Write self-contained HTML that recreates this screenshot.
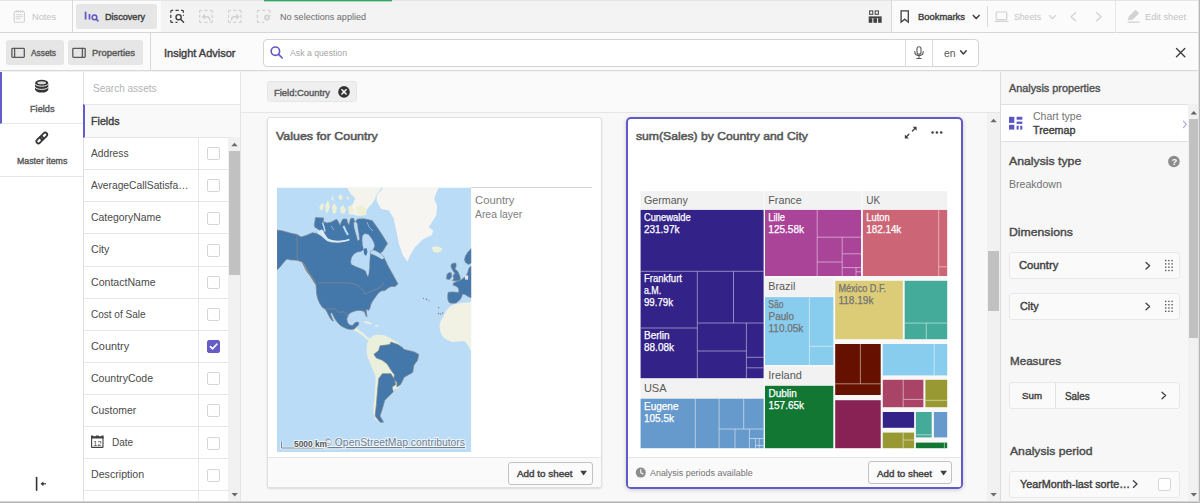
<!DOCTYPE html>
<html lang="en"><head>
<meta charset="utf-8">
<title>Insight Advisor</title>
<style>
*{box-sizing:border-box;margin:0;padding:0}
html,body{width:1200px;height:503px;overflow:hidden;background:#fff}
body{font-family:"Liberation Sans",sans-serif;color:#404040;font-size:12px}
#app{position:relative;width:1200px;height:503px;overflow:hidden;background:#f2f2f2}
.a{position:absolute}
.t{position:absolute;white-space:nowrap;line-height:14px;transform-origin:0 50%}
.b{-webkit-text-stroke-width:0.4px}
svg{position:absolute;overflow:visible}
/* top bars */
#bar1{left:0;top:0;width:1200px;height:33px;background:#fbfbfb;border-bottom:1px solid #d6d6d6}
#bar2{left:0;top:33px;width:1200px;height:38px;background:#fbfbfb;border-bottom:1px solid #d9d9d9}
.btn{position:absolute;background:#e6e6e6;border-radius:3px}
.vdiv{position:absolute;width:1px;background:#d9d9d9}
/* left */
#icons{left:0;top:72px;width:83px;height:431px;background:#fff}
#assets{left:83px;top:72px;width:157px;height:431px;background:#fff;border-left:1px solid #e0e0e0}
.row{position:absolute;left:0;width:145px;height:32.13px;border-bottom:1px solid #e6e6e6}
.row .t{left:7px;top:9px;font-size:11px;color:#4a4a4a}
.cb{position:absolute;left:123px;top:9.4px;width:13px;height:13px;border:1px solid #d6d6d6;border-radius:2px;background:#fff}
/* main */
#main{left:240px;top:72px;width:760px;height:431px;background:#f8f8f8;border-left:1px solid #e4e4e4}
.card{position:absolute;background:#fff;border:1px solid #e0e0e0;border-radius:3px;box-shadow:0 1px 2px rgba(0,0,0,0.12)}
.foot{position:absolute;left:0;right:0;bottom:0;height:30px;background:#fafafa;border-top:1px solid #e6e6e6;border-radius:0 0 3px 3px}
.add{position:absolute;width:84.5px;height:22.5px;border:1px solid #c2c2c2;border-radius:3px;background:#fbfbfb}
/* right */
#right{left:1000px;top:72px;width:200px;height:431px;background:#f7f7f7;border-left:1px solid #dcdcdc}
.pbox{position:absolute;left:8px;width:171px;height:27px;background:#fafafa;border:1px solid #e8e8e8;border-radius:3px}
.h{position:absolute;left:8px;font-size:11.4px;-webkit-text-stroke-width:0.4px;color:#4a4a4a;white-space:nowrap;line-height:14px;transform-origin:0 50%}
</style>
</head>
<body>
<div id="app">

<!-- ===== top bar 1 ===== -->
<div id="bar1" class="a">
  <div class="a" style="left:161px;top:0;width:730px;height:32px;background:#f3f3f3"></div>
  <div class="a" style="left:0;top:0;width:1200px;height:1px;background:#e4e4e4"></div>
  <div class="a" style="left:264px;top:0;width:128px;height:1px;background:#2fa862"></div><div class="a" style="left:264px;top:1px;width:128px;height:1px;background:#2fa862;opacity:.35"></div>
  <div class="t" style="left: 32px; top: 10px; font-size: 9.3px; color: rgb(196, 196, 196); transform: scaleX(0.988);">Notes</div>
  <div class="vdiv" style="left:72px;top:0;height:33px"></div>
  <div class="btn" style="left:76px;top:4px;width:81px;height:25px"></div>
  <div class="t b" style="left: 105px; top: 10px; font-size: 9.3px; color: rgb(64, 64, 64); transform: scaleX(0.98);">Discovery</div>
  <div class="t" style="left: 280px; top: 10px; font-size: 9.3px; color: rgb(107, 107, 107); transform: scaleX(0.973);">No selections applied</div>
  <div class="vdiv" style="left:891px;top:0;height:33px"></div>
  <div class="t b" style="left: 918px; top: 10px; font-size: 9.3px; color: rgb(64, 64, 64); transform: scaleX(1.011);">Bookmarks</div>
  <div class="vdiv" style="left:987px;top:6px;height:21px"></div>
  <div class="t" style="left: 1014px; top: 10px; font-size: 9.3px; color: rgb(196, 196, 196); transform: scaleX(0.933);">Sheets</div>
  <div class="vdiv" style="left:1115px;top:0;height:33px;background:#e6e6e6"></div>
  <div class="t" style="left: 1145px; top: 10px; font-size: 9.3px; color: rgb(196, 196, 196); transform: scaleX(0.991);">Edit sheet</div>
</div>

<!-- ===== top bar 2 ===== -->
<div id="bar2" class="a">
  <div class="btn" style="left:6px;top:7px;width:58px;height:25px"></div>
  <div class="t b" style="left: 31px; top: 13px; font-size: 9.3px; color: rgb(89, 89, 89); transform: scaleX(0.896);">Assets</div>
  <div class="btn" style="left:68px;top:7px;width:75px;height:25px"></div>
  <div class="t b" style="left: 92px; top: 13px; font-size: 9.3px; color: rgb(89, 89, 89); transform: scaleX(1.015);">Properties</div>
  <div class="vdiv" style="left:150px;top:0;height:38px"></div>
  <div class="t b" style="left: 163.5px; top: 13px; font-size: 10.7px; color: rgb(64, 64, 64); transform: scaleX(1.029);">Insight Advisor</div>
  <div class="a" style="left:263px;top:5.5px;width:716px;height:28.5px;background:#fff;border:1px solid #d4d4d4;border-radius:4px"></div>
  <div class="t" style="left: 290px; top: 13px; font-size: 9.6px; color: rgb(166, 166, 166); transform: scaleX(0.906);">Ask a question</div>
  <div class="vdiv" style="left:905px;top:7px;height:26px;background:#d9d9d9"></div>
  <div class="vdiv" style="left:932px;top:7px;height:26px;background:#d9d9d9"></div>
  <div class="t" style="left: 943.5px; top: 13px; font-size: 11px; color: rgb(89, 89, 89); transform: scaleX(0.939);">en</div>
</div>

<!-- ===== left icon column ===== -->
<div id="icons" class="a">
  <div class="a" style="left:0;top:0;width:83px;height:52px;border-left:2px solid #655dc6;border-bottom:1px solid #e6e6e6"></div>
  <div class="t b" style="left: 29.5px; top: 30px; font-size: 9.3px; color: rgb(89, 89, 89); transform: scaleX(0.987);">Fields</div>
  <div class="a" style="left:0;top:52px;width:83px;height:53px;border-bottom:1px solid #e6e6e6"></div>
  <div class="t b" style="left: 16.6px; top: 82px; font-size: 9.3px; color: rgb(89, 89, 89); transform: scaleX(0.945);">Master items</div>
</div>

<!-- ===== assets list ===== -->
<div id="assets" class="a">
  <div class="t" style="left: 8.5px; top: 9px; font-size: 11px; color: rgb(179, 179, 179); transform: scaleX(0.911);">Search assets</div>
  <div class="a" style="left:-1px;top:32px;width:158px;height:34px;background:#f9f9f9;border-top:1px solid #e6e6e6;border-bottom:1px solid #e6e6e6;border-left:2px solid #655dc6"></div>
  <div class="t b" style="left: 7px; top: 42px; font-size: 10.6px; color: rgb(64, 64, 64); transform: scaleX(1.008);">Fields</div>
  <div class="a" style="left:114px;top:66px;width:1px;height:366px;background:#e8e8e8"></div>
  <div class="a" style="left:144px;top:65px;width:13px;height:366px;background:#f1f1f1"></div>
  <div class="a" style="left:145px;top:79px;width:11px;height:124px;background:#c1c1c1"></div>
  <div id="rows" class="a" style="left:0;top:66px;width:145px;height:366px">
    <div class="row" style="top:0.0px"><div class="t" style="transform: scaleX(0.929); left: 6.5px; top: 8px;">Address</div><div class="cb"></div></div>
    <div class="row" style="top:32.1px"><div class="t" style="transform: scaleX(0.934); left: 6.5px; top: 8px;">AverageCallSatisfa…</div><div class="cb"></div></div>
    <div class="row" style="top:64.3px"><div class="t" style="transform: scaleX(0.946); left: 6.5px; top: 8px;">CategoryName</div><div class="cb"></div></div>
    <div class="row" style="top:96.4px"><div class="t" style="transform: scaleX(0.971); left: 6.5px; top: 8px;">City</div><div class="cb"></div></div>
    <div class="row" style="top:128.5px"><div class="t" style="transform: scaleX(0.962); left: 6.5px; top: 8px;">ContactName</div><div class="cb"></div></div>
    <div class="row" style="top:160.7px"><div class="t" style="transform: scaleX(0.91); left: 6.8px; top: 8px;">Cost of Sale</div><div class="cb"></div></div>
    <div class="row" style="top:192.8px"><div class="t" style="transform: scaleX(0.989); left: 6.8px; top: 8px;">Country</div><div class="cb" style="background:#655dc6;border-color:#655dc6"></div></div>
    <div class="row" style="top:224.9px"><div class="t" style="transform: scaleX(0.958); left: 6.8px; top: 8px;">CountryCode</div><div class="cb"></div></div>
    <div class="row" style="top:257.0px"><div class="t" style="transform: scaleX(0.948); left: 6.8px; top: 8px;">Customer</div><div class="cb"></div></div>
    <div class="row" style="top:289.2px"><div class="t" style="left: 27.7px; transform: scaleX(0.912); top: 8px;">Date</div><div class="cb"></div></div>
    <div class="row" style="top:321.3px"><div class="t" style="transform: scaleX(0.967); left: 6.8px; top: 8px;">Description</div><div class="cb"></div></div>
    <div class="row" style="top:353.4px"><div class="cb"></div></div>
  </div>
</div>

<!-- ===== main ===== -->
<div id="main" class="a">
  <div class="a" style="left:0;top:0;width:759px;height:41px;background:#fafafa;border-bottom:1px solid #e6e6e6"></div>
  <div class="a" style="left:26px;top:9px;width:90px;height:20.5px;background:#efefef;border:1px solid #e6e6e6;border-radius:3px"></div>
  <div class="t b" style="left: 33px; top: 14px; font-size: 9.3px; color: rgb(89, 89, 89); transform: scaleX(1.013);">Field:Country</div>

  <!-- card 1 -->
  <div id="card1" class="card" style="left:26px;top:45px;width:335px;height:371px">
    <div class="t b" style="left: 7.9px; top: 11px; font-size: 11.5px; color: rgb(89, 89, 89); -webkit-text-stroke-width: 0.55px; transform: scaleX(1.078);">Values for Country</div>
    <div class="a" style="left:203px;top:69px;width:121px;height:1px;background:#d4d4d4"></div>
    <div class="t" style="left: 207.2px; top: 75px; font-size: 11px; color: rgb(128, 128, 128); transform: scaleX(1.023);">Country</div>
    <div class="t" style="left: 207.2px; top: 89px; font-size: 11px; color: rgb(128, 128, 128); transform: scaleX(0.943);">Area layer</div>
    <div class="foot"><div class="add" style="left:240.3px;top:4px"></div><div class="t b" style="left: 249.2px; top: 9px; font-size: 9.3px; color: rgb(64, 64, 64); transform: scaleX(1.061);">Add to sheet</div></div>
  </div>

  <!-- card 2 -->
  <div id="card2" class="card" style="left:385px;top:45px;width:337px;height:372px;border:2px solid #625ac8;border-radius:5px;box-shadow:0 1px 4px rgba(0,0,0,0.18)">
    <div class="t b" style="left: 7.9px; top: 10px; font-size: 11.5px; color: rgb(89, 89, 89); -webkit-text-stroke-width: 0.55px; transform: scaleX(1.059);">sum(Sales) by Country and City</div>
    <div class="foot" style="border-radius:0 0 2px 2px"><div class="add" style="left:240.3px;top:3px;width:83.5px;height:23px"></div><div class="t b" style="left: 248.7px; top: 9px; font-size: 9.3px; color: rgb(64, 64, 64); transform: scaleX(1.053);">Add to sheet</div>
    <div class="t" style="left: 22px; top: 8px; font-size: 9.2px; color: rgb(115, 115, 115); transform: scaleX(0.971);">Analysis periods available</div></div>
  </div>

  <!-- main scrollbar -->
  <div class="a" style="left:746px;top:41px;width:13px;height:390px;background:#f1f1f1"></div>
  <div class="a" style="left:747px;top:179px;width:11px;height:60px;background:#c1c1c1"></div>
</div>

<!-- ===== right panel ===== -->
<div id="right" class="a">
  <div class="t b" style="left: 8.3px; top: 9px; font-size: 10.5px; color: rgb(82, 82, 82); transform: scaleX(1.03);">Analysis properties</div>
  <div class="a" style="left:0;top:32px;width:187px;height:38px;background:#fff;border-top:1px solid #e0e0e0;border-bottom:1px solid #e0e0e0"></div>
  <div class="t" style="left: 32.4px; top: 37px; font-size: 11px; color: rgb(115, 115, 115); transform: scaleX(0.956);">Chart type</div>
  <div class="t b" style="left: 32.4px; top: 51px; font-size: 10.5px; color: rgb(64, 64, 64); transform: scaleX(1.018);">Treemap</div>
  <div class="h" style="top: 82px; transform: scaleX(1.076); left: 8.3px;">Analysis type</div>
  <div class="t" style="left: 8.3px; top: 105px; font-size: 11px; color: rgb(115, 115, 115); transform: scaleX(0.961);">Breakdown</div>
  <div class="h" style="top: 153px; transform: scaleX(1.074); left: 8.3px;">Dimensions</div>
  <div class="pbox" style="top:180px"></div>
  <div class="t b" style="left: 18.4px; top: 187px; font-size: 10.4px; color: rgb(64, 64, 64); transform: scaleX(1.08);">Country</div>
  <div class="pbox" style="top:221px"></div>
  <div class="t b" style="left: 18.9px; top: 228px; font-size: 10.4px; color: rgb(64, 64, 64); transform: scaleX(1.039);">City</div>
  <div class="h" style="top: 282px; transform: scaleX(1.02); left: 8.7px;">Measures</div>
  <div class="pbox" style="top:310px"></div>
  <div class="a" style="left:54px;top:310px;width:1px;height:27px;background:#e3e3e3"></div>
  <div class="t b" style="left: 21.1px; top: 317px; font-size: 9.4px; color: rgb(64, 64, 64); transform: scaleX(1.037);">Sum</div>
  <div class="t b" style="left: 64.2px; top: 318px; font-size: 10.4px; color: rgb(64, 64, 64); transform: scaleX(0.954);">Sales</div>
  <div class="h" style="top: 372px; transform: scaleX(1.068); left: 8.7px;">Analysis period</div>
  <div class="pbox" style="top:399px"></div>
  <div class="t b" style="left: 18.9px; top: 406px; font-size: 10.4px; color: rgb(64, 64, 64); transform: scaleX(1.039);">YearMonth-last sorte…</div>
  <div class="cb" style="left:157px;top:406px;width:13px;height:13px"></div>
  <!-- scrollbar -->
  <div class="a" style="left:187px;top:32px;width:13px;height:399px;background:#f1f1f1"></div>
  <div class="a" style="left:188px;top:47px;width:12px;height:219px;background:#c1c1c1"></div>
</div>

<svg id="map" class="a" style="left:0;top:0" width="1200" height="503" viewBox="0 0 1200 503" font-family="Liberation Sans, sans-serif">
<defs><clipPath id="mc"><rect x="277" y="187.5" width="194.3" height="264.5"></rect></clipPath></defs>
<g clip-path="url(#mc)">
<rect x="277" y="187.5" width="194.3" height="264.5" fill="#bbdcf7"></rect>
<polygon points="383.6,187.5 376.7,195.2 376.7,201.3 381.3,209 389,210.5 393.5,218.1 396.6,231.9 398.9,244.1 402.7,254.8 407.3,261.7 410.4,254.8 415,247.2 422.6,239.5 431.8,235 433.3,230.4 428.7,227.3 436.4,215 437.1,205.9 434.1,198.2 438.7,187.5" fill="#f6f5f1"></polygon>
<polygon points="347,187.5 381.5,187.5 379.5,191 376.5,194.5 375,199 372.5,203 368,208 364,214 358,216 352,214 349,209 353,204 355,198 350,193" fill="#f4f4ec"></polygon>
<polygon points="443.5,316.5 446,311 450,306.5 455,304 461,303 466,302.5 471.3,302 471.3,352 468,345 464.5,341 458,341.5 452.5,342 447,340 443,337 440,331 439.5,325 441,320" fill="#f1f1e4"></polygon>
<polygon points="353.5,329 356,327.5 358,329 360,331 363,332.5 365,335 368,337.5 370,338.5 369,340.5 366,339 363.5,336.5 360.5,334 357.5,332 354.5,331" fill="#ebf0dc"></polygon>
<polygon points="369,339.5 372,336.5 376,334.5 380,335 384,335 387,336.5 391,338.5 395,341 398.5,343 402,347 404.5,349.5 414,352 419,354.5 417.5,360.5 414,365 412.5,372.5 404,377.5 400.5,384.5 398,389 394.5,388.5 393.5,392 390,395.5 385,400.5 382.5,409 380,416 383.5,422.5 379.5,422.5 375,419 373.5,414 373.5,406 374.5,398 375,390 375.5,382 375.5,376 373,370 370,363 367.5,357 366.5,350 367,344" fill="#ebf0dc"></polygon>
<polygon points="364,321 368,321.5 372,323.5 371,324.5 367,323.5 364,322.5" fill="#ebf0dc"></polygon>
<polygon points="375,325 378.5,325 378,326.5 375,326.5" fill="#ebf0dc"></polygon>
<polygon points="432,247.5 435,246.3 439,246.8 442.3,248.5 441,251.5 437.5,252.8 434,252 432.5,250" fill="#eef0da"></polygon>
<polygon points="319,208 322,203 324,205 322,211" fill="#eef0d6"></polygon>
<polygon points="325,206 328,200 330,206 328,212 326,213" fill="#eef0d6"></polygon>
<polygon points="332,207 334,203 337,207 336,213 333,214" fill="#eef0d6"></polygon>
<polygon points="340,208 343,205 346,210 344,214 341,213" fill="#eef0d6"></polygon>
<polygon points="348,207 351,205 354,210 352,215 349,214" fill="#eef0d6"></polygon>
<polygon points="331,199 333,196 334,201" fill="#eef0d6"></polygon>
<polygon points="338,197 341,194 343,199 340,200" fill="#eef0d6"></polygon>
<polygon points="346,198 348,196 349,200" fill="#eef0d6"></polygon>
<polygon points="356,207 362,205 367,209 366,215 360,216 357,213" fill="#eef0d6"></polygon>
<polygon points="277,230 283,231 290,233 297,234.5 301,237 306,235.5 312.5,232.7 317,233.5 316,230 314.3,225 315.5,217.5 323.8,218 323,221.5 327,223 331.5,222 334,220.5 336.6,219.3 338.5,222 340,225.5 341.5,221.5 343,219 346.7,219 347.5,222.5 349,225 350,220.5 351,218.3 353.7,218.3 354.5,222 356,221 357.5,219 364,218.8 372.2,220.6 377.3,227.6 382.4,235.3 387.5,243.6 385,247.5 382.4,251.8 380,253 383,256 385.5,260.5 387.5,265 390,269.5 392.5,274 395,278.5 398,284 395,286.5 391,286.5 388,288 385,290.5 381,291 378,293.5 375.5,297 373,300.5 371,304 370,308 368.5,310.5 366,309 366.5,313 367,317 365.5,315 364.5,311.5 361,310.5 357,310.5 353.5,311.5 350,313 348,315.5 346.8,319 347.5,322.5 349.5,325 352.5,325.5 354,323.5 356.5,322 358.8,322.5 358.5,325 356,327 354.5,329 351,329.5 347.5,329 344,327.5 340.5,325.5 337.5,322.5 335,319 333,315 331.5,312.5 330.5,314 332,318 333.5,321 332,320.5 329.5,317 327.5,313 325.5,309.5 322,307 319.5,303 317.5,298 316.5,293 316.3,288 315.8,284 313.5,280 311,276.5 308.5,272.5 306.5,268.5 304.5,264.5 302,262 298,260.5 294,260 290.5,260 287,259 284.5,261.5 282,264.5 280,267 277,270" fill="#4477aa" stroke="#84888c" stroke-width="0.7" stroke-linejoin="round"></polygon>
<polygon points="471.3,248.5 468,252 465.5,256 464.5,259.5 465.5,262.5 468.5,264.5 471.3,263" fill="#4477aa" stroke="#84888c" stroke-width="0.7" stroke-linejoin="round"></polygon>
<polygon points="471.3,266 469,268 468,271.5 466.5,275.5 463.5,278 461,280 457,281.5 453.5,283 453,285 455.5,286 458,287.5 459,290.5 458.5,292.5 453,292 448.3,292.2 447.8,295 447.8,299 448.5,301.5 450,303 453,303.3 456,303 458,301.5 460.5,299 462,296 462.3,294 465,294.5 468,296.5 471.3,297.8" fill="#4477aa" stroke="#84888c" stroke-width="0.7" stroke-linejoin="round"></polygon>
<polygon points="452.2,263.5 455.8,263 456.2,266 455,269 457.5,271 459,274 460.3,277.5 460,280.3 456,281 452.5,280.6 454,278 452.8,276 454.8,273.5 453.2,271 451.2,267.5 451,265" fill="#4477aa" stroke="#84888c" stroke-width="0.7" stroke-linejoin="round"></polygon>
<polygon points="447,274.5 449,272.5 451.5,273 451.5,277 449.5,279.5 446.5,279" fill="#4477aa" stroke="#84888c" stroke-width="0.7" stroke-linejoin="round"></polygon>
<polygon points="373.9,354.3 378.7,350.6 380,345.8 389.7,344.6 390.9,342.1 398.1,344.6 401.8,347 404.2,349.4 413.9,351.8 418.8,354.3 417.6,360.3 413.9,365.2 412.7,372.4 404.2,377.3 400.6,384.6 396.9,387 396.9,382.1 393.3,379.7 394.5,374.9 390.9,370 387.2,364 382.4,360.3 376.3,357.9" fill="#4477aa" stroke="#84888c" stroke-width="0.7" stroke-linejoin="round"></polygon>
<polygon points="382.4,373.7 390.9,373.7 394.5,379.7 395.7,384.6 392.1,387 393.3,391.9 389.7,395.5 384.8,400.3 382.4,408.8 380,416.1 383.6,422.2 380,422.2 375.1,416.1 376.3,405.2 377.5,390.6 378.7,378.5" fill="#4477aa" stroke="#84888c" stroke-width="0.7" stroke-linejoin="round"></polygon>
<polygon points="350.6,262 351.5,257.5 354,254 357.5,252 361,251.5 363.5,249.5 362.5,245 362,240 362.5,235.5 365,233.5 368.5,234.5 371,237.5 373.5,241.5 374.8,246 373,250 370.5,253.5 370,258 369.7,263 369.5,268 369,273 368,277 366.5,274 365.5,271 362,269 358,267.5 354.5,266 351.5,264.5" fill="#bbdcf7" stroke="#84888c" stroke-width="0.4"></polygon>
<polygon points="353.7,222.5 356,221.5 357.5,224 358,229 359,234 359.5,240 357.5,240.5 356.5,236 355,231 354,227" fill="#bbdcf7" stroke="#84888c" stroke-width="0.4"></polygon>
<polygon points="370,251 374,250 378,252 382,254.5 384.5,258 382,259.5 378,257 374,255 371,254" fill="#bbdcf7" stroke="#84888c" stroke-width="0.4"></polygon>
<polygon points="313.2,228.6 316.2,228 318,229.6 320,230.6 322,229.4 324,231.6 322,233.3 318.5,233 315,232.4 312.8,231.6" fill="#bbdcf7"></polygon>
<polygon points="317,233.5 319,231 321.5,229.5 323.5,231.5 325.5,235 328,238.5 332,240 338,240.8 345,240 349.3,238.8 349.5,240.5 345,241.8 338,242.8 331,242.2 327,241 323.5,238 320.5,235.5" fill="#d9e9f3"></polygon>
<polygon points="363.5,249 366.5,248 367.5,252 366,256 364,254" fill="#4477aa"></polygon>
<path d="M322.5 222.5L324 227L325 231.5" stroke="#bbdcf7" stroke-width="1.5" fill="none"></path><path d="M343.5 226L345.5 230.5L348 235" stroke="#bbdcf7" stroke-width="2" fill="none"></path><path d="M367 222L369 227L373 231M331 226L334 230" stroke="#8fb4d9" stroke-width="1" fill="none"></path>
<polygon points="464.8,275.6 468.3,275.4 468,279.8 465,279.5" fill="#dfe8ee"></polygon>
<g fill="#7d8894"><circle cx="423.5" cy="298.4" r="0.6"></circle><circle cx="426.5" cy="299.4" r="0.8"></circle><circle cx="429" cy="300.8" r="0.6"></circle><circle cx="438.8" cy="307.8" r="0.7"></circle><circle cx="438.5" cy="313.6" r="0.8"></circle><circle cx="440.6" cy="314" r="0.8"></circle><circle cx="442.6" cy="313" r="0.7"></circle></g>
<path d="M297.1 234.7L297.1 260.5M318.1 282.9L349.4 282.9L357.1 284.9L363.2 290.3L364.7 294.1L373.9 290.3L381.6 286.4L383.1 282.6M325.8 308.9L334.9 308.9L339.4 312.5L343 311.6L348.4 316.2" stroke="#84888c" stroke-width="0.8" fill="none"></path>
<path d="M302.5 262L306.6 270.4L311.2 276.5L315.8 284" stroke="#84888c" stroke-width="1.6" fill="none"></path>
</g>
<path d="M281.5 441.5L281.5 448L340.5 448L340.5 441.5" stroke="#fff" stroke-width="2.4" fill="none" opacity="0.7"></path>
<path d="M281.5 441.5L281.5 448L340.5 448L340.5 441.5" stroke="#777" stroke-width="0.9" fill="none"></path>
<text x="324.3" y="446" font-size="11.2" fill="#6f7f8f" stroke="#fff" stroke-width="2" stroke-opacity="0.7" paint-order="stroke" text-decoration="underline" textLength="140.7" lengthAdjust="spacingAndGlyphs">© OpenStreetMap contributors</text>
<text x="294.0" y="447" font-size="9.5" font-weight="bold" fill="#555" stroke="#fff" stroke-width="2" stroke-opacity="0.8" paint-order="stroke" textLength="33.0" lengthAdjust="spacingAndGlyphs">5000 km</text>
</svg>
<svg id="tree" class="a" style="left:0;top:0" width="1200" height="503" viewBox="0 0 1200 503" font-family="Liberation Sans, sans-serif">
<rect x="640.6" y="191.2" width="306.6" height="257.0" fill="#f8f8f8"></rect>
<rect x="640.6" y="191.2" width="123.0" height="18.2" fill="#f2f2f2"></rect>
<text x="643.9" y="203.6" font-size="11" fill="#595959" textLength="44.0" lengthAdjust="spacingAndGlyphs">Germany</text>
<rect x="640.6" y="209.9" width="123.0" height="168.3" fill="#332288"></rect>
<path d="M640.6 271.3L763.6 271.3M697.3 271.3L697.3 378.2M733.5 271.3L733.5 323M697.3 323L763.6 323M640.6 328L697.3 328M697.3 351L746.4 351M746.4 323L746.4 378.2M746.4 357.3L763.6 357.3M746.4 367.8L763.6 367.8" stroke="#b9b4d8" stroke-width="0.7" fill="none"></path>
<text x="643.9" y="221.0" font-size="10" fill="#fff" stroke="#fff" stroke-width="0.25" textLength="46.8" lengthAdjust="spacingAndGlyphs">Cunewalde</text>
<text x="643.9" y="233.2" font-size="10" fill="#fff" stroke="#fff" stroke-width="0.25" textLength="35.6" lengthAdjust="spacingAndGlyphs">231.97k</text>
<text x="643.9" y="282.0" font-size="10" fill="#fff" stroke="#fff" stroke-width="0.25" textLength="38.1" lengthAdjust="spacingAndGlyphs">Frankfurt</text>
<text x="643.9" y="294.2" font-size="10" fill="#fff" stroke="#fff" stroke-width="0.25" textLength="17.3" lengthAdjust="spacingAndGlyphs">a.M.</text>
<text x="643.9" y="306.4" font-size="10" fill="#fff" stroke="#fff" stroke-width="0.25" textLength="29.2" lengthAdjust="spacingAndGlyphs">99.79k</text>
<text x="644" y="338.5" font-size="10" fill="#fff" stroke="#fff" stroke-width="0.25">Berlin</text>
<text x="644" y="350.7" font-size="10" fill="#fff" stroke="#fff" stroke-width="0.25">88.08k</text>
<rect x="640.6" y="379.3" width="123.0" height="18.9" fill="#f2f2f2"></rect>
<text x="643.9" y="391.7" font-size="11" fill="#595959">USA</text>
<rect x="640.6" y="398.7" width="123.0" height="49.5" fill="#6699cc"></rect>
<path d="M695.3 398.7L695.3 448.2M719.1 398.7L719.1 448.2M743.7 398.7L743.7 429M719.1 429L763.6 429M735 429L735 448.2M749.4 429L749.4 448.2M749.4 438.5L763.6 438.5M755.6 438.5L755.6 448.2M759.2 438.5L759.2 448.2M755.6 445.5L763.6 445.5" stroke="#d6e4f2" stroke-width="0.7" fill="none"></path>
<text x="644" y="410.0" font-size="10" fill="#fff" stroke="#fff" stroke-width="0.25">Eugene</text>
<text x="644" y="422.2" font-size="10" fill="#fff" stroke="#fff" stroke-width="0.25">105.5k</text>
<rect x="765" y="191.2" width="96.0" height="18.2" fill="#f2f2f2"></rect>
<text x="768.3" y="203.6" font-size="11" fill="#595959" textLength="33.4" lengthAdjust="spacingAndGlyphs">France</text>
<rect x="765" y="209.9" width="96.0" height="66.1" fill="#aa4499"></rect>
<path d="M817.2 209.9L817.2 276M817.2 237.2L861 237.2M842.2 237.2L842.2 276M817.2 262L842.2 262M842.2 253.8L861 253.8M842.2 267.6L861 267.6M856 267.6L856 276M856 271.8L861 271.8" stroke="#e3c2de" stroke-width="0.7" fill="none"></path>
<text x="768.3" y="221.0" font-size="10" fill="#fff" stroke="#fff" stroke-width="0.25" textLength="16.7" lengthAdjust="spacingAndGlyphs">Lille</text>
<text x="768.3" y="233.2" font-size="10" fill="#fff" stroke="#fff" stroke-width="0.25" textLength="35.7" lengthAdjust="spacingAndGlyphs">125.58k</text>
<rect x="862.9" y="191.2" width="84.3" height="18.2" fill="#f2f2f2"></rect>
<text x="866.3" y="203.6" font-size="11" fill="#595959" textLength="13.9" lengthAdjust="spacingAndGlyphs">UK</text>
<rect x="862.9" y="209.9" width="84.3" height="66.1" fill="#cc6677"></rect>
<path d="M938.7 209.9L938.7 276M938.7 266.8L947.2 266.8" stroke="#efccd2" stroke-width="0.7" fill="none"></path>
<text x="866.3" y="221.0" font-size="10" fill="#fff" stroke="#fff" stroke-width="0.25" textLength="23.3" lengthAdjust="spacingAndGlyphs">Luton</text>
<text x="866.3" y="233.2" font-size="10" fill="#fff" stroke="#fff" stroke-width="0.25" textLength="35.0" lengthAdjust="spacingAndGlyphs">182.14k</text>
<rect x="765" y="278" width="68.3" height="18.6" fill="#f2f2f2"></rect>
<text x="768.3" y="290.4" font-size="11" fill="#595959" textLength="27.0" lengthAdjust="spacingAndGlyphs">Brazil</text>
<rect x="765" y="297.1" width="68.3" height="67.9" fill="#88ccee"></rect>
<path d="M809.4 297.1L809.4 365M809.4 346.3L833.3 346.3" stroke="#dff1fa" stroke-width="0.7" fill="none"></path>
<text x="768.3" y="308.0" font-size="10" fill="#737373" stroke="#737373" stroke-width="0.25" textLength="15.3" lengthAdjust="spacingAndGlyphs">São</text>
<text x="768.5" y="320.2" font-size="10" fill="#737373" stroke="#737373" stroke-width="0.25">Paulo</text>
<text x="768.5" y="332.4" font-size="10" fill="#737373" stroke="#737373" stroke-width="0.25">110.05k</text>
<rect x="765" y="366.3" width="68.3" height="19.0" fill="#f2f2f2"></rect>
<text x="768.3" y="378.7" font-size="11" fill="#595959">Ireland</text>
<rect x="765" y="385.8" width="68.3" height="62.4" fill="#117733"></rect>
<text x="768.5" y="397.0" font-size="10" fill="#fff" stroke="#fff" stroke-width="0.25">Dublin</text>
<text x="768.5" y="409.2" font-size="10" fill="#fff" stroke="#fff" stroke-width="0.25">157.65k</text>
<rect x="835.2" y="280.8" width="67.6" height="58.4" fill="#ddcc77"></rect>
<text x="838.4" y="292.0" font-size="10" fill="#737373" stroke="#737373" stroke-width="0.25" textLength="47.6" lengthAdjust="spacingAndGlyphs">México D.F.</text>
<text x="838.4" y="304.2" font-size="10" fill="#737373" stroke="#737373" stroke-width="0.25" textLength="35.1" lengthAdjust="spacingAndGlyphs">118.19k</text>
<rect x="904.7" y="280.8" width="42.5" height="58.4" fill="#44aa99"></rect>
<path d="M904.7 323.1L947.2 323.1M926.3 323.1L926.3 339.2" stroke="#c9e7e2" stroke-width="0.7" fill="none"></path>
<rect x="835.2" y="344" width="45.5" height="51.0" fill="#661100"></rect>
<path d="M860.4 344L860.4 383.8M835.2 383.8L880.7 383.8" stroke="#d1b8b2" stroke-width="0.7" fill="none"></path>
<rect x="835.2" y="400.2" width="45.5" height="48.0" fill="#882255"></rect>
<rect x="882.8" y="344" width="64.4" height="31.4" fill="#88ccee"></rect>
<path d="M934.2 344L934.2 375.4" stroke="#dff1fa" stroke-width="0.7" fill="none"></path>
<rect x="882.8" y="379.8" width="40.6" height="27.4" fill="#aa4466"></rect>
<path d="M903.2 379.8L903.2 407.2M903.2 399.4L923.4 399.4" stroke="#e6c8d2" stroke-width="0.7" fill="none"></path>
<rect x="925.4" y="379.8" width="21.8" height="27.4" fill="#999933"></rect>
<path d="M925.4 400.3L947.2 400.3" stroke="#e1e1c3" stroke-width="0.7" fill="none"></path>
<rect x="882.8" y="412" width="31.3" height="15.8" fill="#332288"></rect>
<rect x="915.9" y="412" width="15.8" height="25.4" fill="#44aa99"></rect>
<path d="M915.9 434.8L931.7 434.8" stroke="#c9e7e2" stroke-width="0.7" fill="none"></path>
<rect x="933.9" y="412" width="13.3" height="25.4" fill="#6699cc"></rect>
<rect x="882.8" y="432.6" width="31.3" height="15.6" fill="#999933"></rect>
<path d="M903.2 432.6L903.2 448.2M903.2 440L914.1 440" stroke="#e1e1c3" stroke-width="0.7" fill="none"></path>
<rect x="915.9" y="442.6" width="31.3" height="5.6" fill="#117733"></rect>
<path d="M944.4 442.6L944.4 448.2" stroke="#bcd8c4" stroke-width="0.7" fill="none"></path>
</svg>
<svg id="ic" class="a" style="left:0;top:0" width="1200" height="503" viewBox="0 0 1200 503" fill="none" stroke-linecap="round" stroke-linejoin="round" font-family="Liberation Sans, sans-serif">
<g stroke="#d2d2d2" stroke-width="1.1"><rect x="14.2" y="11.5" width="10.2" height="10.8" rx="1.2"></rect><path d="M16.2 14.8H22.4M16.2 16.8H22.4M16.2 18.8H20.2M16.4 10.6V12M18.4 10.6V12M20.4 10.6V12M22.4 10.6V12"></path></g>
<g stroke="#5e56c5" stroke-width="1.7" stroke-linecap="butt"><path d="M85.6 11.8V19.6M89.5 14V19.6"></path><circle cx="94.5" cy="17.4" r="2.3" stroke-width="1.5"></circle><path d="M96.2 19.1L98 20.9" stroke-linecap="round" stroke-width="1.5"></path></g>
<path d="M170.8 12.8V11.4Q170.8 10.4 171.8 10.4H173.20000000000002M181.0 10.4H182.4Q183.4 10.4 183.4 11.4V12.8M170.8 20.0V21.4Q170.8 22.4 171.8 22.4H173.20000000000002M175.50000000000003 10.4H178.70000000000002M170.8 14.799999999999999V18.0M175.50000000000003 22.4H177.50000000000003M183.4 14.799999999999999V15.799999999999999" stroke="#404040" stroke-width="1.25" stroke-linecap="butt"></path>
<g stroke="#404040" stroke-width="1.4"><circle cx="178.6" cy="17.2" r="2.6"></circle><path d="M180.7 19.3L183.6 22.2"></path></g>
<path d="M199.6 12.8V11.4Q199.6 10.4 200.6 10.4H202.0M209.79999999999998 10.4H211.2Q212.2 10.4 212.2 11.4V12.8M199.6 20.0V21.4Q199.6 22.4 200.6 22.4H202.0M204.3 10.4H207.5M199.6 14.799999999999999V18.0M209.79999999999998 22.4H211.2Q212.2 22.4 212.2 21.4V20.0M204.3 22.4H207.5M212.2 14.799999999999999V18.0" stroke="#d2d2d2" stroke-width="1.25" stroke-linecap="butt"></path>
<path d="M202.8 16.8H207C208.8 16.8 209.6 18 209.6 19.8" stroke="#d2d2d2" stroke-width="1.5"></path><path d="M201.6 16.8L205 13.8V19.8Z" fill="#d2d2d2" stroke="none"></path>
<path d="M228.5 12.8V11.4Q228.5 10.4 229.5 10.4H230.9M238.7 10.4H240.1Q241.1 10.4 241.1 11.4V12.8M228.5 20.0V21.4Q228.5 22.4 229.5 22.4H230.9M233.20000000000002 10.4H236.4M228.5 14.799999999999999V18.0M238.7 22.4H240.1Q241.1 22.4 241.1 21.4V20.0M233.20000000000002 22.4H236.4M241.1 14.799999999999999V18.0" stroke="#d2d2d2" stroke-width="1.25" stroke-linecap="butt"></path>
<path d="M238.4 16.8H234.2C232.4 16.8 231.6 18 231.6 19.8" stroke="#d2d2d2" stroke-width="1.5"></path><path d="M239.6 16.8L236.2 13.8V19.8Z" fill="#d2d2d2" stroke="none"></path>
<path d="M257.4 12.8V11.4Q257.4 10.4 258.4 10.4H259.79999999999995M267.6 10.4H269.0Q270.0 10.4 270.0 11.4V12.8M257.4 20.0V21.4Q257.4 22.4 258.4 22.4H259.79999999999995M262.09999999999997 10.4H265.3M257.4 14.799999999999999V18.0M262.09999999999997 22.4H264.09999999999997M270.0 14.799999999999999V15.799999999999999" stroke="#d2d2d2" stroke-width="1.25" stroke-linecap="butt"></path>
<circle cx="267" cy="17.6" r="3" fill="#d2d2d2" stroke="none"></circle><path d="M265.9 16.5L268.1 18.7M268.1 16.5L265.9 18.7" stroke="#f4f4f4" stroke-width="0.9"></path>
<g stroke="#404040" stroke-width="1" stroke-linejoin="miter"><rect x="869.6" y="10.9" width="3.2" height="3.4"></rect><rect x="875.2" y="10.9" width="3.2" height="3.4"></rect></g>
<g fill="#404040" stroke="none"><rect x="868.7" y="16.4" width="13" height="1.8"></rect><rect x="868.7" y="18.2" width="3.6" height="4.6"></rect><rect x="873.4" y="18.2" width="3.6" height="4.6"></rect><rect x="878.1" y="18.2" width="3.6" height="4.6"></rect></g>
<path d="M901.1 10.9H908.3V22.2L904.7 19.2L901.1 22.2Z" stroke="#404040" stroke-width="1.3" stroke-linejoin="miter"></path>
<path d="M973.3 15.4L976.1999999999999 18.6L979.0999999999999 15.4" stroke="#404040" stroke-width="1.5"></path>
<g stroke="#d2d2d2" stroke-width="1.2"><rect x="996.2" y="12" width="10.6" height="7.6" rx="1"></rect><path d="M995 21.4H1008"></path></g>
<path d="M1049.6 15.6L1052.5 18.8L1055.3999999999999 15.6" stroke="#d2d2d2" stroke-width="1.3"></path>
<path d="M1075.6 12.8L1071 16.8L1075.6 20.8" stroke="#d2d2d2" stroke-width="1.3"></path>
<path d="M1096.6 12.8L1101.1999999999998 16.8L1096.6 20.8" stroke="#d2d2d2" stroke-width="1.3"></path>
<g stroke="#d2d2d2" stroke-width="1.2"><path d="M1128.6 19.6L1129.4 16.6L1135.6 10.6L1138.2 13.2L1132 19.2Z" fill="#d2d2d2"></path><path d="M1128 22.2H1139"></path></g>
<g stroke="#595959" stroke-width="1.3"><rect x="11.9" y="48.3" width="12.4" height="9" rx="0.8"></rect><path d="M14.6 48.3V57.3"></path><rect x="72.8" y="48.3" width="12.4" height="9" rx="0.8"></rect><path d="M82.4 48.3V57.3"></path></g>
<g stroke="#5e56c5" stroke-width="1.6"><circle cx="275.4" cy="51.2" r="4.2"></circle><path d="M278.6 54.4L282.2 58"></path></g>
<g stroke="#595959" stroke-width="1.1"><rect x="917" y="46.8" width="4" height="7.4" rx="2"></rect><path d="M914.8 51.6C914.8 57 923.2 57 923.2 51.6M919 55.8V58.4M916.8 58.5H921.2"></path></g>
<path d="M960.6 50.8L963.4 54.0L966.2 50.8" stroke="#404040" stroke-width="1.5"></path>
<path d="M1176.5 48.5L1184.8 56.8M1184.8 48.5L1176.5 56.8" stroke="#404040" stroke-width="1.4"></path>
<path d="M35.1 83.2A6.6 3.4 0 0 1 48.3 83.2V89.3A6.6 3.3 0 0 1 35.1 89.3Z" fill="#333" stroke="none"></path><ellipse cx="41.7" cy="82.7" rx="4.3" ry="1.5" fill="#d9d9d9" stroke="none"></ellipse><path d="M35.1 83.6A6.6 2.6 0 0 0 48.3 83.6M35.1 86.8A6.6 2.6 0 0 0 48.3 86.8" stroke="#fff" stroke-width="0.9" stroke-linecap="butt"></path>
<g stroke="#333" stroke-width="1.8" transform="rotate(-45 41.8 138)"><rect x="35" y="136" width="8" height="4" rx="2"></rect><rect x="40.6" y="136" width="8" height="4" rx="2"></rect></g>
<circle cx="344" cy="91.9" r="5.8" fill="#333" stroke="none"></circle><path d="M341.9 89.8L346.1 94M346.1 89.8L341.9 94" stroke="#fff" stroke-width="1.5"></path>
<path d="M231.3 146.2L234.5 142.8L237.7 146.2Z" fill="#6a6a6a" stroke="none"></path>
<path d="M231.5 493.0L234.7 496.4L237.89999999999998 493.0Z" fill="#6a6a6a" stroke="none"></path>
<path d="M990.4 122.2L993.6 118.8L996.8000000000001 122.2Z" fill="#6a6a6a" stroke="none"></path>
<path d="M990.4 493.0L993.6 496.4L996.8000000000001 493.0Z" fill="#6a6a6a" stroke="none"></path>
<path d="M1190.6 114.5L1193.8 111.1L1197.0 114.5Z" fill="#606060" stroke="none"></path>
<path d="M1190.6 493.0L1193.8 496.4L1197.0 493.0Z" fill="#6a6a6a" stroke="none"></path>
<path d="M210.4 346.6L212.6 348.8L216.8 344.2" stroke="#fff" stroke-width="1.7"></path>
<g stroke="#404040" stroke-width="1.1"><rect x="91.6" y="437" width="11.4" height="10.4" rx="0.5"></rect></g><path d="M91 435.6H93L93.6 436.6H95.4L96 435.6H98.6L99.2 436.6H101L101.6 435.6H103.6V438.6H91Z" fill="#404040" stroke="none"></path>
<text x="93.3" y="445.7" font-size="7.6" fill="#404040" stroke="none" textLength="8.2" lengthAdjust="spacingAndGlyphs">12</text>
<path d="M36.6 477.6V490.2" stroke="#333" stroke-width="1.6"></path><path d="M41.6 483.8H46" stroke="#333" stroke-width="1.2" stroke-linecap="butt"></path><path d="M40.6 483.8L43.4 481.4V486.2Z" fill="#333" stroke="none"></path>
<g stroke="#404040" stroke-width="1.3"><path d="M912.4 131L915.4 128"></path><path d="M908.9 134.3L905.9 137.3"></path></g><g fill="#404040" stroke="none"><path d="M912.6 126.8H916.6V130.8Z"></path><path d="M904.8 134.6V138.6H908.8Z"></path></g>
<g fill="#404040" stroke="none"><circle cx="932.6" cy="132.6" r="1.25"></circle><circle cx="936.9" cy="132.6" r="1.25"></circle><circle cx="941.2" cy="132.6" r="1.25"></circle></g>
<path d="M580.2 470.8H587L583.6 475.4Z" fill="#404040" stroke="none"></path><path d="M940.2 470.8H947L943.6 475.4Z" fill="#404040" stroke="none"></path>
<circle cx="640.8" cy="472.6" r="5" fill="#8c8c8c" stroke="none"></circle><path d="M640.8 469.6V472.8L643 474" stroke="#fff" stroke-width="1.1"></path>
<g fill="#5e56c5" stroke="none"><rect x="1009" y="116.8" width="5.3" height="6.1"></rect><rect x="1009" y="124.8" width="5.3" height="4.8"></rect><rect x="1016.6" y="116.8" width="5.7" height="2.9"></rect><rect x="1016.6" y="121.6" width="5.7" height="2.3"></rect><rect x="1016.6" y="125.8" width="2.1" height="3.8"></rect><rect x="1020.2" y="125.8" width="2.1" height="3.8"></rect></g>
<path d="M1183.4 121.2L1186.4 124.4L1183.4 127.60000000000001" stroke="#aaa5e4" stroke-width="1.1"></path>
<circle cx="1173.9" cy="161.5" r="5.8" fill="#8c8c8c" stroke="none"></circle><text x="1171.4" y="165.2" font-size="9.5" font-weight="bold" fill="#fff" stroke="none">?</text>
<path d="M1146 262.4L1149.6 265.7L1146 269.0" stroke="#404040" stroke-width="1.3"></path>
<path d="M1146 303.2L1149.6 306.5L1146 309.8" stroke="#404040" stroke-width="1.3"></path>
<path d="M1162 392.2L1165.6 395.5L1162 398.8" stroke="#404040" stroke-width="1.3"></path>
<path d="M1133.4 480.8L1137.0 484.1L1133.4 487.40000000000003" stroke="#404040" stroke-width="1.3"></path>
<rect x="1165.0" y="259.9" width="1.4" height="1.4" fill="#595959" stroke="none"></rect>
<rect x="1168.2" y="259.9" width="1.4" height="1.4" fill="#595959" stroke="none"></rect>
<rect x="1171.4" y="259.9" width="1.4" height="1.4" fill="#595959" stroke="none"></rect>
<rect x="1165.0" y="263.2" width="1.4" height="1.4" fill="#595959" stroke="none"></rect>
<rect x="1168.2" y="263.2" width="1.4" height="1.4" fill="#595959" stroke="none"></rect>
<rect x="1171.4" y="263.2" width="1.4" height="1.4" fill="#595959" stroke="none"></rect>
<rect x="1165.0" y="266.5" width="1.4" height="1.4" fill="#595959" stroke="none"></rect>
<rect x="1168.2" y="266.5" width="1.4" height="1.4" fill="#595959" stroke="none"></rect>
<rect x="1171.4" y="266.5" width="1.4" height="1.4" fill="#595959" stroke="none"></rect>
<rect x="1165.0" y="269.8" width="1.4" height="1.4" fill="#595959" stroke="none"></rect>
<rect x="1168.2" y="269.8" width="1.4" height="1.4" fill="#595959" stroke="none"></rect>
<rect x="1171.4" y="269.8" width="1.4" height="1.4" fill="#595959" stroke="none"></rect>
<rect x="1165.0" y="300.7" width="1.4" height="1.4" fill="#595959" stroke="none"></rect>
<rect x="1168.2" y="300.7" width="1.4" height="1.4" fill="#595959" stroke="none"></rect>
<rect x="1171.4" y="300.7" width="1.4" height="1.4" fill="#595959" stroke="none"></rect>
<rect x="1165.0" y="304.0" width="1.4" height="1.4" fill="#595959" stroke="none"></rect>
<rect x="1168.2" y="304.0" width="1.4" height="1.4" fill="#595959" stroke="none"></rect>
<rect x="1171.4" y="304.0" width="1.4" height="1.4" fill="#595959" stroke="none"></rect>
<rect x="1165.0" y="307.3" width="1.4" height="1.4" fill="#595959" stroke="none"></rect>
<rect x="1168.2" y="307.3" width="1.4" height="1.4" fill="#595959" stroke="none"></rect>
<rect x="1171.4" y="307.3" width="1.4" height="1.4" fill="#595959" stroke="none"></rect>
<rect x="1165.0" y="310.6" width="1.4" height="1.4" fill="#595959" stroke="none"></rect>
<rect x="1168.2" y="310.6" width="1.4" height="1.4" fill="#595959" stroke="none"></rect>
<rect x="1171.4" y="310.6" width="1.4" height="1.4" fill="#595959" stroke="none"></rect>
</svg>
<!-- bottom edge -->
<div class="a" style="left:1198px;top:0;width:1px;height:503px;background:#e2e2e2"></div><div class="a" style="left:1199px;top:0;width:1px;height:503px;background:#b6b6b6"></div><div class="a" style="left:0;top:501px;width:1200px;height:1px;background:#d4d4d4"></div><div class="a" style="left:0;top:502px;width:1200px;height:1px;background:#b4b4b4"></div>
</div>


</body></html>
